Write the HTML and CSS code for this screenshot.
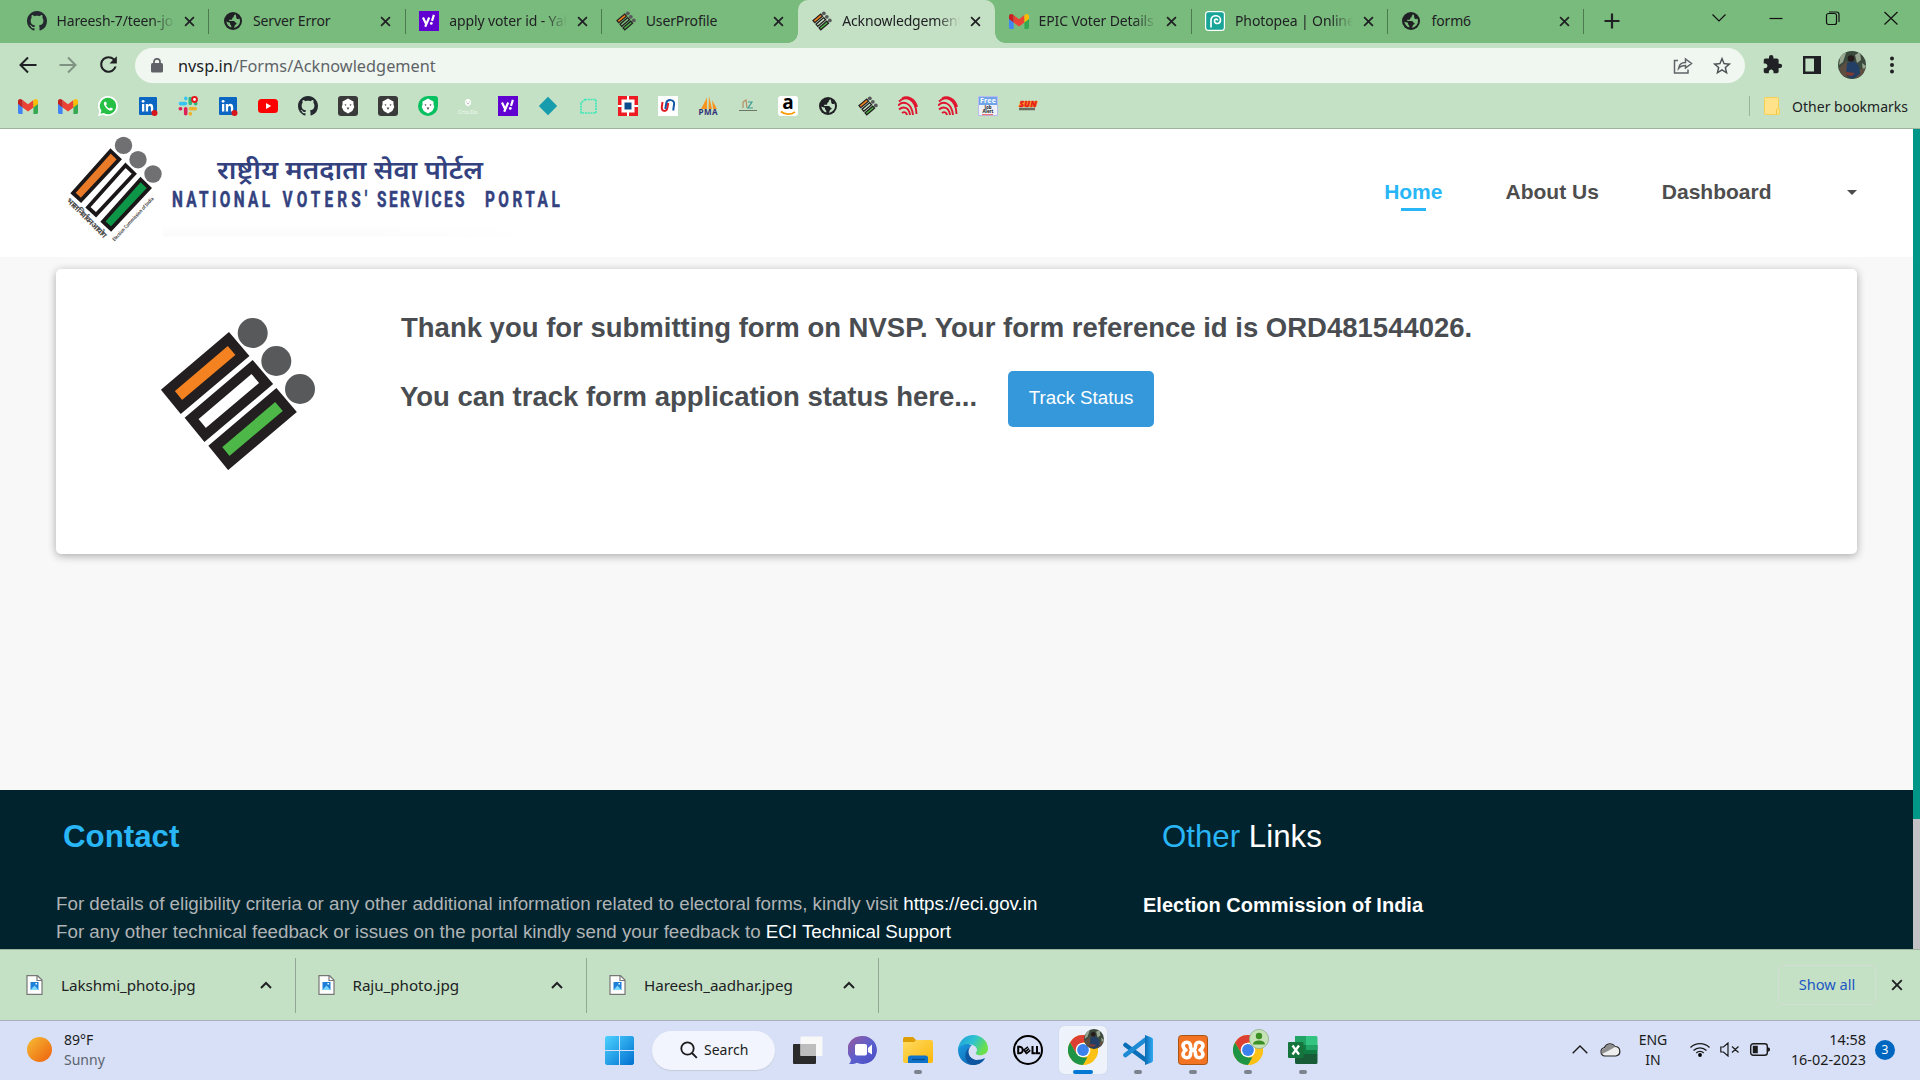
FILE: index.html
```html
<!DOCTYPE html>
<html lang="en">
<head>
<meta charset="utf-8">
<title>Acknowledgement</title>
<link rel="stylesheet" href="styles.css">
</head>
<body>
<svg class="defs" width="0" height="0" aria-hidden="true">
  <defs>
    <linearGradient id="gStart" x1="0" y1="0" x2="1" y2="1"><stop offset="0" stop-color="#4dd2ff"/><stop offset="1" stop-color="#006fd0"/></linearGradient>
    <linearGradient id="gSun" x1="0" y1="0" x2="1" y2="1"><stop offset="0" stop-color="#f5bd35"/><stop offset="1" stop-color="#ef5f0c"/></linearGradient>
    <linearGradient id="gChat" x1="0" y1="0" x2="1" y2="1"><stop offset="0" stop-color="#9a5a9c"/><stop offset=".55" stop-color="#5a5fcf"/><stop offset="1" stop-color="#4a4cc0"/></linearGradient>
    <linearGradient id="gFolder" x1="0" y1="0" x2="1" y2="1"><stop offset="0" stop-color="#ffdb62"/><stop offset="1" stop-color="#fcb70a"/></linearGradient>
    <linearGradient id="gEdgeTop" x1="0" y1="0" x2="1" y2=".4"><stop offset="0" stop-color="#1c9bde"/><stop offset=".55" stop-color="#2fc3cf"/><stop offset="1" stop-color="#6be04a"/></linearGradient>
    <linearGradient id="gEdgeLow" x1="0" y1="0" x2="1" y2="1"><stop offset="0" stop-color="#1b9be2"/><stop offset="1" stop-color="#0c59a4"/></linearGradient>
    <linearGradient id="gCode" x1="0" y1="0" x2="1" y2="0"><stop offset="0" stop-color="#0b6cb5"/><stop offset="1" stop-color="#2fa9f2"/></linearGradient>
    <clipPath id="cAvatar"><circle cx="14" cy="14" r="14"/></clipPath>
  </defs>
  <symbol id="github" viewBox="0 0 16 16"><path fill="#24292f" d="M8 0C3.58 0 0 3.58 0 8c0 3.54 2.29 6.53 5.47 7.59.4.07.55-.17.55-.38 0-.19-.01-.82-.01-1.49-2.01.37-2.53-.49-2.69-.94-.09-.23-.48-.94-.82-1.13-.28-.15-.68-.52-.01-.53.63-.01 1.08.58 1.23.82.72 1.21 1.87.87 2.33.66.07-.52.28-.87.51-1.07-1.78-.2-3.64-.89-3.64-3.95 0-.87.31-1.59.82-2.15-.08-.2-.36-1.02.08-2.12 0 0 .67-.21 2.2.82.64-.18 1.32-.27 2-.27s1.36.09 2 .27c1.53-1.04 2.2-.82 2.2-.82.44 1.1.16 1.92.08 2.12.51.56.82 1.27.82 2.15 0 3.07-1.87 3.75-3.65 3.95.29.25.54.73.54 1.48 0 1.07-.01 1.93-.01 2.2 0 .21.15.46.55.38A8.01 8.01 0 0 0 16 8c0-4.42-3.58-8-8-8z"/></symbol>
  <symbol id="globe" viewBox="0 0 20 20"><circle cx="10" cy="10" r="9" fill="#202124"/><path fill="currentColor" d="M12.5 3.2c-1 .9-2 1.2-1.8 2.5.3 1-1.9.6-1.5 2 .3.9-.9 1.300-1.900 1.100-1.200-.3-1.900.6-.7 1.200h4.200c1.200 0 1 1.600 2.200 1.700 1.100.2.6 1.500-.2 1.700-1.600.3-.7 1.800-2 3.300 3.700-.5 6.200-3.200 6.200-6.700 0-1-.3-1.900-.6-2.600-1 .6-2.100 1.100-2.700.2-.5-.9-.6-3.300-1.200-4.400zM3.300 10.400c.4 2.900 2.300 5.200 5 6 .3-1.200-.3-2-.9-2.600-.9-.9.1-1.700-.8-2.200-.9-.5-2-.2-3.300-1.200z"/></symbol>
  <symbol id="yahoo" viewBox="0 0 20 20"><path fill="#6001d2" d="M0 0h20v20H0z"/><path d="M4 6.500l3 6.200M10.200 6.500L6.200 15.800M14.900 3.800l-1.900 6" stroke="#fff" stroke-width="2.200" fill="none"/><circle cx="12.300" cy="12.400" r="1.400" fill="#fff"/></symbol>
  <symbol id="eci" viewBox="160 317 157 153"><g stroke="#231f20" stroke-width="10"><path fill="#f58220" d="M228.400 339l14 16.500-61 51.500-13.500-16.500z"/><path fill="none" d="M252.100 367l14 16.500-61 51.500-13.500-16.500z"/><path fill="#4db848" d="M275.800 395l14 16.500-61 51.500-13.500-16.500z"/></g><g fill="#58595b"><circle cx="252.700" cy="333" r="15"/><circle cx="276.300" cy="361" r="15"/><circle cx="300" cy="389" r="15"/></g></symbol>
  <symbol id="gmail" viewBox="0 0 20 16"><path fill="#4285f4" d="M0 3v11.500C0 15.300.7 16 1.500 16H4.600V5.500z"/><path fill="#34a853" d="M20 3v11.500c0 .8-.7 1.500-1.500 1.500h-3.100V5.500z"/><path fill="#ea4335" d="M4.600 9.500V2L10 6.200 15.400 2v7.500L10 13.600z"/><path fill="#fbbc04" d="M15.400 2l.8-.6C17.700.2 20 1.200 20 3.100V6l-4.600 3.500z"/><path fill="#c5221f" d="M4.600 2l-.8-.6C2.300.2 0 1.200 0 3.100V6l4.600 3.500z"/></symbol>
  <symbol id="whatsapp" viewBox="0 0 20 20"><path fill="#fff" d="M10 0a10 10 0 0 1 0 20c-1.700 0-3.300-.4-4.700-1.200L0 20l1.300-5A10 10 0 0 1 10 0z"/><path fill="#25c044" d="M10 1.800a8.200 8.200 0 1 1-4.300 15.200l-3.100.8.800-3A8.200 8.200 0 0 1 10 1.800z"/><path fill="#fff" d="M7 5.500c-1.700 1-1.600 3 .6 5.700s4.500 4 6.200 3.100c1.300-.8 1.200-1.600.7-2l-1.800-.9-1.200 1.200c-1.500-.5-2.900-1.900-3.500-3.300l.9-1.200-.8-2.200z"/></symbol>
  <symbol id="linkedin" viewBox="0 0 20 20"><rect x="1" y="1" width="18" height="18" rx="1" fill="#0a66c2"/><path fill="#fff" d="M4 8h2.300v7.500H4zM7.800 8h2.200v1c1.500-2 5.200-1.500 5.200 2v4.500h-2.300v-4c0-2.200-2.800-2-2.800 0v4H7.800z"/><circle cx="5.100" cy="5.300" r="1.400" fill="#fff"/><circle cx="16.500" cy="17" r="3" fill="#d9141b"/></symbol>
  <symbol id="slack" viewBox="0 0 20 20"><g stroke-width="3.600" stroke-linecap="round"><path stroke="#36c5f0" d="M2.500 7.600h5M7.800 2.200v.4"/><path stroke="#2eb67d" d="M12.300 2.500v5M17.500 7.600h.3"/><path stroke="#ecb22e" d="M12.300 12.700h5M12.300 17.600v.3"/><path stroke="#e01e5a" d="M7.700 12.700v5M2.300 12.700h.3"/></g><circle cx="16.500" cy="3.500" r="2.400" fill="#fff" stroke="#e8141c" stroke-width="2"/></symbol>
  <symbol id="youtube" viewBox="0 0 20 20"><rect y="3" width="20" height="14" rx="3.500" fill="red"/><path fill="#fff" d="M8 7l5.200 3L8 13z"/></symbol>
  <symbol id="bear" viewBox="0 0 20 20"><path fill="#fff" d="M4.500 5.500l2-1 3.500-2 3.500 2 2 1v3l.8 2.500-2 4-4.300 2.500L5.700 15l-2-4 .8-2.500z"/><path fill="#444" d="M6.500 8l2 .8-1 1.200zM13.500 8l-2 .8 1 1.200zM8.700 11.500h2.600L10 14z"/></symbol>
  <symbol id="beardark" viewBox="0 0 20 20"><rect width="20" height="20" rx="3" fill="#3a3a3a"/><use href="#bear"/></symbol>
  <symbol id="beargreen" viewBox="0 0 20 20"><path d="M10 0h7a3 3 0 0 1 3 3v7a10 10 0 1 1-10-10z" fill="#07c160"/><use href="#bear"/></symbol>
  <symbol id="diamond" viewBox="0 0 20 20"><path fill="#169cad" d="M10 .8l9.200 9.200L10 19.200.8 10z"/></symbol>
  <symbol id="dashed" viewBox="0 0 20 20"><path fill="none" stroke="#3ce8b8" stroke-width="1.700" stroke-dasharray="2 .8" d="M7 3.500h11V17H3V7z"/></symbol>
  <symbol id="hdfc" viewBox="0 0 20 20"><path fill="#ed1c24" d="M0 0h20v20H0z"/><path fill="#fff" d="M3.500 3.500h13v13h-13zM9 0h2v20H9zM0 9h20v2H0z"/><path fill="#0c4a8b" d="M6.500 6.500h7v7h-7z"/></symbol>
  <symbol id="union" viewBox="0 0 20 20"><path fill="#fff" d="M0 0h20v20H0z"/><path fill="none" stroke="#e11b22" stroke-width="2" d="M4.500 6l-.7 5c-.5 5 5 5 5.500 1l.9-5"/><path fill="none" stroke="#1458a6" stroke-width="2" d="M7.300 13l1-6c.8-4 8.500-4 7.800 1l-.9 6.500"/></symbol>
  <symbol id="airtel" viewBox="0 0 20 20"><g fill="none" stroke="#e0152f" stroke-width="1.900"><path d="M1 5.500C7-.5 18 2 18.500 18M0 9.500c5-5 13.500-3.500 15 9.500M1 13.500c4-3.500 10-2.500 11 5.500M4 17c2-1.500 4.500-1 5 2M4 2.500C9-.5 17 2 19 11"/></g></symbol>
  <symbol id="photopea" viewBox="0 0 20 20"><rect width="20" height="20" rx="3.500" fill="#fff"/><rect x="1.200" y="1.200" width="17.600" height="17.600" rx="2" fill="#18a497"/><path fill="none" stroke="#fff" stroke-width="1.700" d="M6 16.500V9.500c0-6.500 9.500-6 9.500-.5 0 4.500-6 4.500-6 1 0-2.500 3-2.500 3-.5"/></symbol>
  <symbol id="x" viewBox="0 0 12 12"><path stroke="#202124" stroke-width="1.900" d="M1.200 1.200l9.600 9.600M10.800 1.200L1.200 10.800"/></symbol>
  <symbol id="up" viewBox="0 0 12 8"><path fill="none" stroke="#202124" stroke-width="2" d="M1 7l5-5 5 5"/></symbol>
  <symbol id="jpg" viewBox="0 0 17 20"><path fill="#fff" stroke="#777" stroke-width="1.200" d="M1 .7h10.500L16 5v14.300H1z"/><path fill="none" stroke="#777" stroke-width="1.200" d="M11 .7V5.500h5"/><path fill="#1d7fd8" d="M4.500 7h8v8h-8z"/><path fill="#7bd8ff" d="M4.500 15l4-4.500 4 4.500z"/><path fill="#fff" d="M9.500 8h1.500v1.500H9.500z"/></symbol>
  <symbol id="chrome" viewBox="0 0 30 30"><circle cx="15" cy="15" r="15" fill="#fbc116"/><path fill="#dd4033" d="M2 7.500A15 15 0 0 1 28 7.500H15L8.500 18.700z"/><path fill="#1e9447" d="M2 7.500L8.500 18.750 15 22.500h6.500L15 30A15 15 0 0 1 2 7.500z"/><path fill="#fbc116" d="M15 7.500h13A15 15 0 0 1 15 30l6.500-11.250z"/><circle cx="15" cy="15" r="7.300" fill="#fff"/><circle cx="15" cy="15" r="5.900" fill="#3b82ee"/></symbol>
  <symbol id="photo" viewBox="0 0 28 28"><g clip-path="url(#cAvatar)"><path fill="#3b4a3d" d="M0 0h28v28H0z"/><path fill="#97a690" d="M3 1l5 1-3 9-4 3zM17 4l5-3 1 8-4 3zM24 12l4 3-3 6z"/><path fill="#5d4e42" d="M1 17l8-7 2 14-5 4zM20 19l7-2-3 11h-6z"/><path fill="#243f66" d="M9 12l7-2 5 5 1 8-8 5-6-4z"/><circle cx="13" cy="7.500" r="3.300" fill="#251b1a"/><path fill="#813c32" d="M8 21l9 1-3 3-6-1z"/></g></symbol>
</svg>

<header class="browser">
  <div class="tabstrip">
    <div class="tab"><svg class="fav"><use href="#github"/></svg><span class="title fade">Hareesh-7/teen-jo</span><svg class="close"><use href="#x"/></svg></div>
    <div class="tab"><svg class="fav"><use href="#globe"/></svg><span class="title">Server Error</span><svg class="close"><use href="#x"/></svg></div>
    <div class="tab"><svg class="fav"><use href="#yahoo"/></svg><span class="title fade">apply voter id - Yah</span><svg class="close"><use href="#x"/></svg></div>
    <div class="tab no-sep"><svg class="fav"><use href="#eci"/></svg><span class="title">UserProfile</span><svg class="close"><use href="#x"/></svg></div>
    <div class="tab active"><svg class="fav"><use href="#eci"/></svg><span class="title fade">Acknowledgement</span><svg class="close"><use href="#x"/></svg></div>
    <div class="tab"><svg class="fav gm"><use href="#gmail"/></svg><span class="title fade">EPIC Voter Details</span><svg class="close"><use href="#x"/></svg></div>
    <div class="tab"><svg class="fav"><use href="#photopea"/></svg><span class="title fade">Photopea | Online</span><svg class="close"><use href="#x"/></svg></div>
    <div class="tab"><svg class="fav"><use href="#globe"/></svg><span class="title">form6</span><svg class="close"><use href="#x"/></svg></div>
    <svg class="newtab" viewBox="0 0 16 16"><path stroke="#202124" stroke-width="2.200" d="M8 .5v15M.5 8h15"/></svg>
    <div class="winctl">
      <svg viewBox="0 0 16 16"><path d="M1.500 4.500L8 11l6.500-6.500"/></svg>
      <svg viewBox="0 0 16 16"><path d="M1.500 8.500h13"/></svg>
      <svg viewBox="0 0 16 16"><rect x="1.500" y="3.500" width="10" height="11" rx="2"/><path d="M4 2h7.500a2.500 2.500 0 0 1 2.500 2.500V12"/></svg>
      <svg viewBox="0 0 16 16"><path d="M1.500 2l13 12.500M14.500 2l-13 12.500"/></svg>
    </div>
  </div>

  <div class="toolbar">
    <span class="tool"><svg width="18" height="18" viewBox="0 0 18 18"><path fill="none" stroke="#202124" stroke-width="2" d="M17.500 9H2M9 1.500L1.500 9 9 16.500"/></svg></span>
    <span class="tool"><svg width="18" height="18" viewBox="0 0 18 18"><path fill="none" stroke="#7e9381" stroke-width="2" d="M.5 9H16M9 1.500L16.500 9 9 16.500"/></svg></span>
    <span class="tool"><svg width="25" height="25" viewBox="0 0 24 24"><path fill="#202124" d="M17.650 6.350A7.960 7.960 0 0 0 12 4a8 8 0 1 0 7.730 10h-2.080A6 6 0 1 1 12 6c1.660 0 3.140.69 4.220 1.780L13 11h7V4z"/></svg></span>
    <div class="omnibox">
      <svg class="lock" width="12" height="15" viewBox="0 0 12 15"><rect y="5" width="12" height="9.500" rx="1.500" fill="#5f6368"/><path fill="none" stroke="#5f6368" stroke-width="1.700" d="M3 6V3.800a3 3 0 0 1 6 0V6"/></svg>
      <span class="url">nvsp.in<span class="path">/Forms/Acknowledgement</span></span>
      <svg class="share" width="20" height="19" viewBox="0 0 20 19"><path fill="none" stroke="#5f6368" stroke-width="1.500" d="M5 5H1.500v12.500h13.500V14M5.500 13c.5-4 3-6 7-6V3.500L18.500 8l-6 4.500V10c-3 0-5 .5-7 3z" transform="translate(0 -.5)"/></svg>
      <svg class="star" width="22" height="22" viewBox="0 0 24 24"><path fill="#4c5155" d="M22 9.240l-7.190-.62L12 2 9.190 8.630 2 9.240l5.460 4.730L5.820 21 12 17.270 18.180 21l-1.630-7.030zM12 15.400l-3.760 2.270 1-4.280-3.320-2.880 4.380-.38L12 6.100l1.710 4.040 4.380.38-3.320 2.880 1 4.280z"/></svg>
    </div>
    <span class="tool"><svg width="21" height="21" viewBox="0 0 24 24"><path fill="#202124" d="M20.500 11H19V7c0-1.100-.9-2-2-2h-4V3.500a2.500 2.500 0 0 0-5 0V5H4c-1.100 0-1.990.9-1.990 2v3.800H3.500c1.490 0 2.700 1.210 2.700 2.700s-1.210 2.700-2.700 2.700H2V20c0 1.100.9 2 2 2h3.800v-1.500c0-1.490 1.210-2.700 2.700-2.700s2.700 1.210 2.700 2.700V22H17c1.100 0 2-.9 2-2v-4h1.500a2.500 2.500 0 0 0 0-5z"/></svg></span>
    <span class="tool"><svg width="18" height="18" viewBox="0 0 18 18"><path fill="none" stroke="#202124" stroke-width="2.400" d="M1.200 1.200h15.600v15.600H1.200z"/><path fill="#202124" d="M11 1h6v16h-6z"/></svg></span>
    <span class="tool"><svg width="28" height="28"><use href="#photo"/></svg></span>
    <span class="tool"><svg width="4" height="18" viewBox="0 0 4 18" fill="#202124"><circle cx="2" cy="2.500" r="2"/><circle cx="2" cy="9" r="2"/><circle cx="2" cy="15.500" r="2"/></svg></span>
  </div>

  <div class="bookmarks">
    <svg class="bm gm"><use href="#gmail"/></svg>
    <svg class="bm gm"><use href="#gmail"/></svg>
    <svg class="bm"><use href="#whatsapp"/></svg>
    <svg class="bm"><use href="#linkedin"/></svg>
    <svg class="bm"><use href="#slack"/></svg>
    <svg class="bm"><use href="#linkedin"/></svg>
    <svg class="bm"><use href="#youtube"/></svg>
    <svg class="bm"><use href="#github"/></svg>
    <svg class="bm"><use href="#beardark"/></svg>
    <svg class="bm"><use href="#beardark"/></svg>
    <svg class="bm"><use href="#beargreen"/></svg>
    <svg class="bm" viewBox="0 0 20 20"><use href="#bear" x="5" y="1" width="10" height="11"/><text x="10" y="18" font-size="5.500" text-anchor="middle" fill="#f3fbf3">Crio.Do</text></svg>
    <svg class="bm"><use href="#yahoo"/></svg>
    <svg class="bm"><use href="#diamond"/></svg>
    <svg class="bm"><use href="#dashed"/></svg>
    <svg class="bm"><use href="#hdfc"/></svg>
    <svg class="bm"><use href="#union"/></svg>
    <svg class="bm" viewBox="0 0 20 20"><path fill="#f7941e" d="M9 1.500V13H3zM11 0l3 13h-3.500zM14 4l5 9h-4z"/><text x="10" y="19" font-size="8" font-weight="700" text-anchor="middle" textLength="19" fill="#303178">PMA</text></svg>
    <svg class="bm" viewBox="0 0 20 20"><path fill="none" stroke="#b58b62" stroke-width="1.200" d="M5 12V6l3-2 1 8"/><path fill="none" stroke="#3f9b95" stroke-width="1.200" d="M10 6h4l-4 6h5"/><path stroke="#6d7565" d="M1 14.500h18"/></svg>
    <svg class="bm" viewBox="0 0 20 20"><rect width="20" height="20" rx="3" fill="#fff"/><text x="10" y="13.300" font-size="19" font-weight="700" text-anchor="middle" font-family="Open Sans">a</text><path fill="none" stroke="#f90" stroke-width="1.700" d="M3 15.500c4 3.500 10 3.500 14 .3"/></svg>
    <svg class="bm"><use href="#globe"/></svg>
    <svg class="bm"><use href="#eci"/></svg>
    <svg class="bm"><use href="#airtel"/></svg>
    <svg class="bm"><use href="#airtel"/></svg>
    <svg class="bm" viewBox="0 0 20 20"><path fill="#eef0fa" stroke="#b9bdee" d="M.5.500h19v19H.5z"/><path fill="#6fa5e8" d="M1 1h18v8H1z"/><g font-weight="700" text-anchor="middle"><text x="10" y="7" font-size="7" textLength="16" fill="#fff">Free</text><text x="10" y="12.800" font-size="4.500" fill="#222">Job</text><text x="10" y="17.300" font-size="4.500" fill="#222">Alert</text></g><path stroke="#e55" d="M4 18.700h11"/></svg>
    <svg class="bm" viewBox="0 0 20 20"><path fill="#ff9d2e" d="M3 5h17l-2 6H0z"/><text x="10" y="11" font-size="8" font-weight="700" font-style="italic" textLength="17" text-anchor="middle" fill="#e5211b" stroke="#e5211b" stroke-width=".6">SUN</text><path stroke="#6a6b5c" stroke-width="2.500" d="M1 13h16"/></svg>
    <div class="other"><svg width="16" height="18" viewBox="0 0 16 18"><path fill="#ffe28a" stroke="#f6cf55" d="M.5 1.500a1 1 0 0 1 1-1h12a1 1 0 0 1 1 1V11l1 1v4.500a1 1 0 0 1-1 1h-13a1 1 0 0 1-1-1z"/><path fill="none" stroke="#f3c843" d="M12.500 17v-4.500l2-1.500"/></svg><span>Other bookmarks</span></div>
  </div>
</header>

<div class="viewport">
  <main class="page">
    <div class="site-header">
      <svg class="brand" width="510" height="112" viewBox="56 133 510 112">
        <defs>
          <linearGradient id="gShade" x1="0" y1="0" x2="0" y2="1"><stop offset="0" stop-color="#fff"/><stop offset="1" stop-color="#f8f8f9"/></linearGradient>
          <linearGradient id="gFade" x1="0" y1="0" x2="1" y2="0"><stop offset=".5" stop-color="#fff" stop-opacity="0"/><stop offset="1" stop-color="#fff"/></linearGradient>
        </defs>
        <path fill="url(#gShade)" d="M163 225h382v20H163z"/>
        <path fill="url(#gFade)" d="M163 225h382v20H163z"/>
        <path fill="#fff" d="M56 236.500h500V246H56z"/>
        <g stroke="#1b1718" stroke-width="3.800" stroke-linejoin="miter">
          <path fill="#e87a28" d="M110.600 151l8.700 8.400-38.300 41-8-7.400z"/>
          <path fill="#fff" d="M125.600 165.300l8.700 8.400L96 214.700l-8-7.400z"/>
          <path fill="#0d9648" d="M140.600 179.600l8.700 8.400L111 229l-8-7.400z"/>
        </g>
        <g fill="#707072"><circle cx="123.500" cy="145.400" r="8.700"/><circle cx="138" cy="159.700" r="8.700"/><circle cx="153" cy="174" r="8.700"/></g>
        <text class="brand-mini" transform="translate(65 200) rotate(45)" font-size="8" font-weight="700" textLength="53" xml:space="preserve">भारत  निर्वाचन  आयोग</text>
        <text class="brand-mini" transform="translate(114.500 241.500) rotate(-47)" font-size="5" font-weight="700" textLength="58" lengthAdjust="spacingAndGlyphs">Election Commission of India</text>
        <text class="brand-hi" x="217" y="178.500" font-size="26" textLength="266" lengthAdjust="spacingAndGlyphs">राष्ट्रीय मतदाता सेवा पोर्टल</text>
        <text class="brand-en" transform="translate(172 207) scale(.7 1)" font-size="22"><tspan x="0" textLength="140">NATIONAL</tspan><tspan x="158" textLength="121">VOTERS'</tspan><tspan x="293" textLength="125">SERVICES</tspan><tspan x="447" textLength="107">PORTAL</tspan></text>
      </svg>
      <nav class="nav">
        <a class="current">Home</a><a>About Us</a><a>Dashboard</a><span class="caret"></span>
      </nav>
    </div>

    <section class="card">
      <svg class="emblem" width="157" height="153"><use href="#eci"/></svg>
      <div class="message">
        <h2>Thank you for submitting form on NVSP. Your form reference id is ORD481544026.</h2>
        <div class="track"><h2>You can track form application status here...</h2><a class="btn">Track Status</a></div>
      </div>
    </section>

    <footer class="footer">
      <div>
        <h3 class="contact">Contact</h3>
        <p>For details of eligibility criteria or any other additional information related to electoral forms, kindly visit <a>https://eci.gov.in</a><br>For any other technical feedback or issues on the portal kindly send your feedback to <a>ECI Technical Support</a></p>
      </div>
      <div>
        <h3 class="links">Other <span>Links</span></h3>
        <p class="link">Election Commission of India</p>
      </div>
    </footer>
  </main>
  <div class="scrollbar"><div class="thumb"></div></div>
</div>

<div class="downloads">
  <div class="dl"><svg class="file"><use href="#jpg"/></svg><span>Lakshmi_photo.jpg</span><svg class="up"><use href="#up"/></svg></div>
  <div class="dl"><svg class="file"><use href="#jpg"/></svg><span>Raju_photo.jpg</span><svg class="up"><use href="#up"/></svg></div>
  <div class="dl"><svg class="file"><use href="#jpg"/></svg><span>Hareesh_aadhar.jpeg</span><svg class="up"><use href="#up"/></svg></div>
  <button class="showall">Show all</button>
  <svg class="dlx"><use href="#x"/></svg>
</div>

<div class="taskbar">
  <div class="weather"><svg width="25" height="25" viewBox="0 0 25 25"><circle cx="12.500" cy="12.500" r="12.500" fill="url(#gSun)"/></svg><div class="wtext"><span>89°F</span><span class="dim">Sunny</span></div></div>
  <div class="apps">
    <svg class="start" width="29" height="29" viewBox="0 0 29 29"><path fill="url(#gStart)" d="M1.500 0H14v14H0V1.500zM15 0h12.500L29 1.500V14H15zM0 15h14v14H1.500L0 27.500zM15 15h14v12.500L27.500 29H15z"/></svg>
    <div class="search"><svg width="18" height="18" viewBox="0 0 18 18"><circle cx="7.500" cy="7.500" r="6.200" fill="none" stroke="#1b1b1b" stroke-width="1.800"/><path stroke="#1b1b1b" stroke-width="1.900" d="M12 12l4.800 4.800"/></svg><span>Search</span></div>
    <span class="app"><svg width="30" height="30" viewBox="0 0 30 30"><rect y="9" width="23" height="20" rx="1" fill="#2b2b2b"/><rect x="7.500" y="1.500" width="22" height="19.500" rx="1" fill="#f8f8f8"/><path fill="#bdbdbd" d="M7.500 9H23v12H7.500z"/></svg></span>
    <span class="app"><svg width="30" height="30" viewBox="0 0 30 30"><path fill="url(#gChat)" d="M15 1a14 14 0 1 1-6 26.700c-2.500 1.300-5 1.300-8 1.300 1.500-1.500 2-3 1.800-5A14 14 0 0 1 15 1z"/><rect x="7" y="9" width="12" height="11.500" rx="2" fill="#fff"/><path fill="#fff" d="M20 13l4-3.500v10L20 17z"/></svg></span>
    <span class="app run"><svg width="30" height="30" viewBox="0 0 30 30"><path fill="#de9d05" d="M0 4a2 2 0 0 1 2-2h8l3 3v3H0z"/><path fill="url(#gFolder)" d="M0 7h11l2-2h15a2 2 0 0 1 2 2v19a2 2 0 0 1-2 2H2a2 2 0 0 1-2-2z"/><path fill="#0f73c9" d="M5 28v-5a2.500 2.500 0 0 1 2.500-2.500h15A2.500 2.500 0 0 1 25 23v5z"/><path stroke="#0a4a86" stroke-width="1.200" d="M9 24.500h13"/></svg></span>
    <span class="app"><svg width="30" height="30" viewBox="0 0 30 30"><path fill="url(#gEdgeLow)" d="M0 15C0 8 8 7 14 10.500 9 12 9 18 12 22c4 4.500 9 4 15 1.500C24 28 20 30 15 30 6 30 0 23 0 15z"/><path fill="#0e56a0" d="M13 11c-5 5-2 13 5 14 4 0 7-1 9-2-3 5-8 7-12 7-9-1-10-14-2-19z"/><path fill="url(#gEdgeTop)" d="M0 14.500C1 5 8 0 15 0c9 0 15 6.500 15 13.500 0 7-9 8-12 5.500-1-1 1-1.500 1-4C19 8 4 6 0 14.500z"/></svg></span>
    <span class="app"><svg width="30" height="30" viewBox="0 0 30 30"><circle cx="15" cy="15" r="14" fill="none" stroke="#000" stroke-width="2"/><g fill="none" stroke="#000" stroke-width="2"><path d="M5.200 11.700v6.600h1.300a3.300 3.300 0 0 0 0-6.600zM19.500 11v7.300h3.300M24 11v7.300h3"/><path d="M10.800 15l4.200-3.200M12 16.800l4.200-3.200M13.200 18.600l4.200-3.200" stroke-width="1.500"/><path d="M10.500 14.300l3.300 4.700" stroke-width="1.500"/></g></svg></span>
    <span class="app focus"><svg width="30" height="30"><use href="#chrome"/></svg><svg class="badge"><use href="#photo"/></svg></span>
    <span class="app run"><svg width="30" height="30" viewBox="0 0 30 30"><path fill="none" stroke="#0b6fb8" stroke-width="4.600" stroke-linecap="round" d="M2.500 10L22 24.500"/><path fill="none" stroke="#1c8ad4" stroke-width="4.600" stroke-linecap="round" d="M2.500 20L22 5"/><path fill="url(#gCode)" d="M22 0l6.500 2.500A2.500 2.500 0 0 1 30 5v20a2.500 2.500 0 0 1-1.500 2.500L22 30z"/></svg></span>
    <span class="app run"><svg width="30" height="30" viewBox="0 0 30 30"><rect x=".5" y=".5" width="29" height="29" rx="3" fill="#f27321" stroke="#a85413"/><path fill="none" stroke="#fff" stroke-width="3.600" stroke-linecap="round" stroke-linejoin="round" d="M6.500 8c2.500-1.500 6-.5 6 3 0 2.500.5 3.500 2.500 3.500s2.500-1 2.500-3.500c0-3.500 3.500-4.500 6-3s1.500 5.500-1.500 7c3 1.500 4 5.500 1.500 7s-6 .5-6-3c0-2.500-.5-3.500-2.500-3.500s-2.500 1-2.500 3.500c0 3.500-3.500 4.500-6 3s-1.500-5.500 1.500-7c-3-1.500-4-5.500-1.500-7z"/></svg></span>
    <span class="app run"><svg width="30" height="30"><use href="#chrome"/></svg><svg class="badge" viewBox="0 0 20 20"><circle cx="10" cy="10" r="9.600" fill="#c5e2b7" stroke="#8fae86" stroke-width=".8"/><circle cx="10" cy="7" r="3.200" fill="#3c8f24"/><path fill="#3c8f24" d="M4 15.500c0-5.500 12-5.500 12 0z"/></svg></span>
    <span class="app run"><svg width="30" height="30" viewBox="0 0 30 30"><path fill="#21a366" d="M7 1h11v9H7z"/><path fill="#33c481" d="M18 1h10a1.500 1.500 0 0 1 1.500 1.500V10H18z"/><path fill="#185c37" d="M7 19h22.500v8.500A1.500 1.500 0 0 1 28 29H8.500A1.500 1.500 0 0 1 7 27.500z"/><path fill="#107c41" d="M7 10h22.500v9H7z"/><path fill="#21a366" d="M18 10h11.500v5H18z"/><rect y="7" width="15.500" height="16" rx="1" fill="#14743c"/><path stroke="#fff" stroke-width="2.300" d="M4.500 10.500l6.500 9M11 10.500l-6.500 9"/></svg></span>
  </div>
  <div class="tray">
    <svg width="16" height="9" viewBox="0 0 16 9"><path fill="none" stroke="#1b1b1b" stroke-width="1.400" d="M.7 8.300L8 1l7.300 7.300"/></svg>
    <svg class="cloud" width="21" height="15" viewBox="0 0 21 15"><path fill="#eee" stroke="#222" stroke-width="1.200" d="M5 14a4.300 4.300 0 0 1-.5-8.500A6 6 0 0 1 15 4.500 4.800 4.800 0 0 1 16 14z"/><path fill="#8e8e8e" d="M2 12a4 4 0 0 1 3-6 5.500 5.500 0 0 1 10-1l-7 4z"/></svg>
    <div class="lang"><span>ENG</span><span>IN</span></div>
    <svg class="wifi" width="20" height="15" viewBox="0 0 20 15"><g fill="none" stroke="#1b1b1b" stroke-width="1.300"><path d="M.5 5.500a13.500 13.500 0 0 1 19 0M3.500 8.500a9.200 9.200 0 0 1 13 0M6.300 11a5.200 5.200 0 0 1 7.400 0"/></g><circle cx="10" cy="13" r="1.900"/></svg>
    <svg class="vol" width="20" height="15" viewBox="0 0 20 15"><path fill="none" stroke="#1b1b1b" stroke-width="1.200" d="M.8 5h2.700L8 1v13l-4.500-4H.8zM12 4.500l6.500 6M18.500 4.500l-6.500 6"/></svg>
    <svg class="bat" width="20" height="13" viewBox="0 0 20 13"><rect x=".7" y=".7" width="16.600" height="11.600" rx="2.500" fill="none" stroke="#1b1b1b" stroke-width="1.400"/><path fill="#1b1b1b" d="M2.800 2.800h5v7.400h-5zM18 4.500c1.300 0 2 .5 2 2s-.7 2-2 2z"/></svg>
    <div class="clock"><span>14:58</span><span>16-02-2023</span></div>
    <span class="count">3</span>
  </div>
</div>
</body>
</html>
```
FILE: styles.css
```css
* { box-sizing: border-box; }
body {
  margin: 0;
  width: 1920px;
  height: 1080px;
  overflow: hidden;
  display: flex;
  flex-direction: column;
  font-family: "Noto Sans", "Open Sans", sans-serif;
  font-size: 14px;
  color: #202124;
}
.defs { position: absolute; }
svg { display: block; flex: none; }

/* Browser chrome */
.browser { height: 129px; background: #c5e1c5; border-bottom: 1px solid #9db39e; flex: none; }
.tabstrip { display: flex; height: 43px; background: #79bb7c; padding-left: 12.500px; }
.tab {
  position: relative;
  display: flex;
  align-items: center;
  width: 196.430px;
  flex: none;
  padding: 0 12px 1px 13px;
}
.tab::after { content: ""; position: absolute; right: -.5px; top: 9px; width: 1px; height: 25px; background: #4c7a50; }
.tab.no-sep::after, .tab.active::after { display: none; }
.tab.active { background: #c5e1c5; border-radius: 10px 10px 0 0; }
.tab.active::before {
  content: "";
  position: absolute;
  left: -10px; right: -10px; bottom: 0;
  height: 10px;
  background:
    radial-gradient(circle at 0 0, transparent 9.500px, #c5e1c5 10px) left / 10px 10px no-repeat,
    radial-gradient(circle at 100% 0, transparent 9.500px, #c5e1c5 10px) right / 10px 10px no-repeat;
}
.fav { position: relative; width: 20px; height: 20px; margin-left: 1px; color: #79bb7c; }
.fav.gm { height: 16px; }
.title { width: 119px; margin: 0 0 1px 10px; overflow: hidden; white-space: nowrap; letter-spacing: -.13px; }
.title.fade { -webkit-mask-image: linear-gradient(90deg, #000 95px, transparent 118px); mask-image: linear-gradient(90deg, #000 95px, transparent 118px); }
.close { width: 11px; height: 11px; margin-left: 8.500px; }
.newtab { width: 16px; height: 16px; margin: 13px 0 0 20px; }
.winctl { display: flex; gap: 41.300px; margin: 10px 0 0 91px; }
.winctl svg { width: 16px; height: 16px; fill: none; stroke: #111; stroke-width: 1.200; }

.toolbar { display: flex; align-items: center; height: 42px; padding: 1px 0 0 8px; }
.tool { width: 40px; display: flex; justify-content: center; flex: none; }
.tool:first-child { padding-right: 1px; }
.omnibox {
  display: flex;
  align-items: center;
  width: 1610px;
  height: 35px;
  margin: 2px 7px 0;
  padding: 0 12px 0 16px;
  border-radius: 18px;
  background: #f0f7f0;
  flex: none;
}
.url { margin-left: 15px; font-size: 16.300px; letter-spacing: .02px; }
.url .path { color: #5f6368; }
.share { margin-left: auto; }
.star { margin-left: 18px; }

.bookmarks { display: flex; align-items: center; gap: 20px; height: 42px; padding: 0 12px 0 18px; color: #c5e1c5; }
.bm { width: 20px; height: 20px; }
.bm text { fill-opacity: 1; }
.bm.gm { height: 16px; }
.other { display: flex; align-items: center; gap: 12px; height: 20px; margin-left: auto; padding-left: 14px; border-left: 1px solid #9db39e; color: #202124; font-size: 14px; white-space: nowrap; }

/* Web page */
.viewport { display: flex; height: 820px; flex: none; overflow: hidden; }
.page { width: 1913px; height: 820px; background: #f8f8f8; font-family: "Liberation Sans", Arial, sans-serif; overflow: hidden; }
.scrollbar { width: 7px; background: #c2c2c6; }
.thumb { height: 690px; background: #009688; }

.site-header { display: flex; height: 128px; padding: 4px 56px 0; background: #fff; }
.brand-hi { font-family: "Noto Sans Devanagari", "Noto Sans", sans-serif; font-weight: 600; fill: #33427f; }
.brand-en { font-family: Roboto, sans-serif; font-weight: 700; fill: #33427f; stroke: #33427f; stroke-width: .5; }
.brand-mini { font-family: "Noto Sans", sans-serif; fill: #4a4a4a; }
.nav { display: flex; margin: 47px 0 0 auto; gap: 63px; font-size: 21px; line-height: 24px; font-weight: 700; color: #4d4d4d; }
.nav a { position: relative; height: 24px; }
.nav .current { color: #29b6f6; }
.nav .current::after { content: ""; position: absolute; left: 17px; top: 28px; width: 25px; height: 3px; background: #29b6f6; }
.caret { margin: 10px 0 0 12.500px; width: 10px; height: 5px; border: 5px solid transparent; border-top-color: #4d4d4d; border-bottom: 0; }

.card {
  display: flex;
  align-items: flex-start;
  height: 285px;
  margin: 12px 56px 0;
  padding-left: 104px;
  border-radius: 5px;
  background: #fff;
  box-shadow: 0 2px 8px rgba(0, 0, 0, .32);
}
.emblem { margin-top: 48px; }
.message { margin: 42px 0 0 84px; }
h2, h3, p { margin: 0; }
h2 { font-size: 27.500px; line-height: 34px; color: #494d51; white-space: nowrap; }
.track { display: flex; margin-top: 26px; }
.track h2 { width: 608px; margin: 9px 0 0 -1px; }
.btn { width: 146px; height: 56px; border-radius: 5px; background: #3498db; color: #fff; font-size: 18.750px; line-height: 53px; text-align: center; }

.footer { display: grid; grid-template-columns: 1087px 1fr; height: 159px; margin-top: 236px; padding: 29px 0 0 56px; background: #00232e; }
h3 { font-size: 31.250px; line-height: 36px; color: #29b6f6; }
.contact { padding-left: 7px; }
.links { padding-left: 19px; font-weight: 400; }
.links span { color: #fff; }
.footer p { margin-top: 34.500px; font-size: 18.750px; line-height: 28px; color: #b0b3b5; white-space: nowrap; }
.footer p a { color: #fff; }
.footer .link { margin-top: 36px; font-size: 20px; font-weight: 700; color: #fff; }

/* Downloads shelf */
.downloads { display: flex; align-items: center; height: 72px; background: #c5e1c5; border-top: 1px solid #9db39e; border-bottom: 1px solid #a9b0bb; padding-left: 4px; flex: none; }
.dl { display: flex; align-items: center; width: 291.500px; height: 55px; padding: 0 23px 1px 22px; border-right: 1px solid #93a894; font-size: 15.200px; }
.dl span { margin-left: 18px; letter-spacing: -.05px; }
.file { width: 17px; height: 20px; }
.up { width: 12px; height: 8px; margin-left: auto; }
.showall { margin-left: auto; width: 98px; height: 40px; border: 1px solid #d3dcd5; border-radius: 5px; background: none; color: #1a56c4; font: 14.600px "Noto Sans", sans-serif; padding: 0 0 3px; }
.dlx { width: 12px; height: 12px; margin: 0 17px 1px 15px; }

/* Taskbar */
.taskbar { display: flex; height: 59px; background: #d7e0f6; color: #1b1b1b; flex: none; }
.weather { display: flex; align-items: center; width: 605px; padding: 0 0 2px 27px; gap: 12px; }
.wtext, .lang, .clock { display: flex; flex-direction: column; line-height: 20px; }
.dim { color: #5d636e; }
.apps { display: flex; align-items: center; padding-bottom: 1px; }
.search { display: flex; align-items: center; gap: 6px; width: 123px; height: 39px; margin: 0 6px 0 18px; padding: 0 0 1px 28px; border-radius: 20px; background: #f2f5fd; box-shadow: 0 1px 1px #c5cbdc; }
.app { position: relative; display: flex; align-items: center; justify-content: center; width: 48px; height: 48px; margin-right: 7px; border-radius: 5px; }
.search + .app { margin-left: 3px; }
.app.focus { background: #eef2fb; box-shadow: 0 0 1px #b5bccd; }
.app.run::after, .app.focus::after { content: ""; position: absolute; bottom: 0; width: 8px; height: 4px; border-radius: 2px; background: #7d828e; }
.app.focus::after { width: 20px; background: #0078d4; }
.badge { position: absolute; right: 3px; top: 3px; width: 20px; height: 20px; }
.tray { display: flex; align-items: center; margin-left: auto; padding: 0 25px 2px 0; }
.cloud { margin-left: 12px; }
.lang { width: 40px; margin-left: 12px; text-align: center; }
.wifi { margin-left: 17px; }
.vol { margin-left: 10px; }
.bat { margin-left: 10px; }
.clock { width: 96px; text-align: right; font-size: 14.400px; }
.count { width: 20px; height: 20px; margin-left: 9px; border-radius: 50%; background: #0067c0; color: #fff; font-size: 12px; line-height: 20px; text-align: center; }
```
